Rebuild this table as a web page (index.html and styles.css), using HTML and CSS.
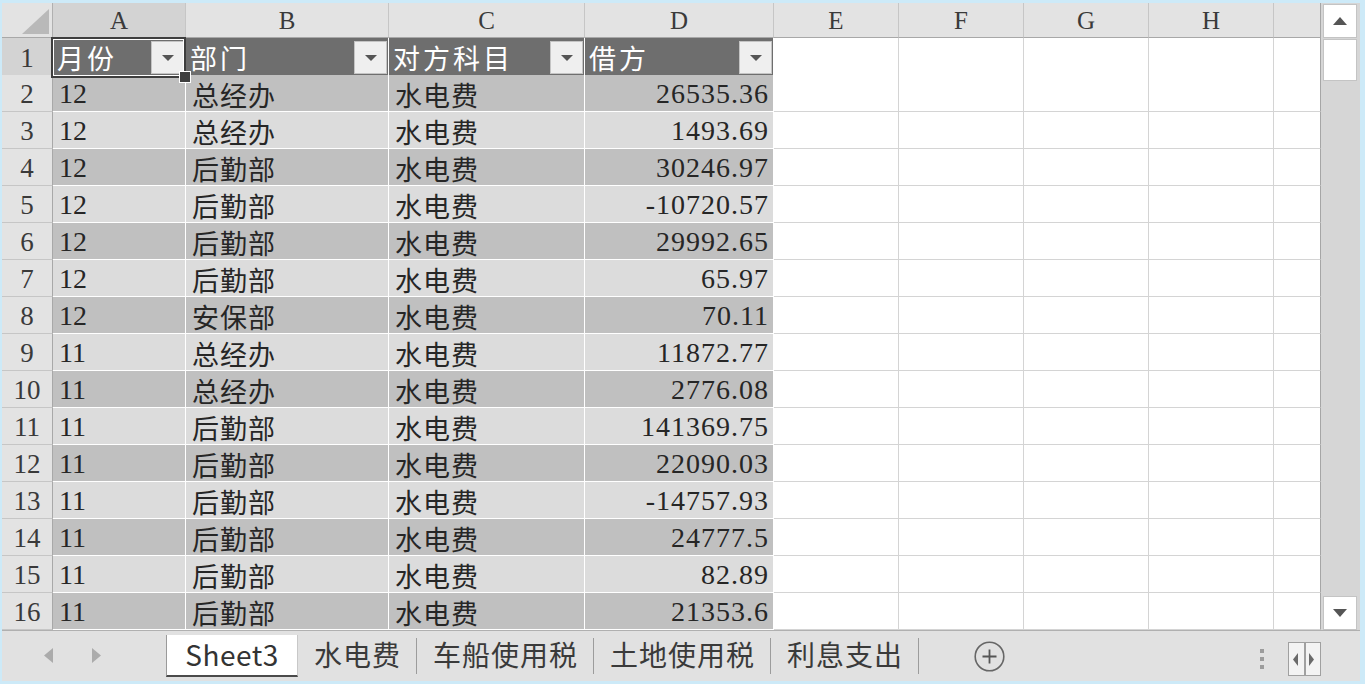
FILE: index.html
```html
<!DOCTYPE html>
<html lang="zh-CN">
<head>
<meta charset="utf-8">
<title>Sheet3</title>
<link rel="stylesheet" href="styles.css">
</head>
<body>
<div class="app">
  <div class="main">
    <div class="sheet">
      <div class="row hdr">
        <div class="corner"><svg class="corner-tri" width="27" height="25" viewBox="0 0 27 25"><polygon points="27,0 27,25 0,25" fill="#b9b9b9"/></svg></div>
        <div class="ch sel">A</div><div class="ch">B</div><div class="ch">C</div><div class="ch">D</div><div class="ch">E</div><div class="ch">F</div><div class="ch">G</div><div class="ch">H</div><div class="ch last"></div>
      </div>
      <div class="row">
        <div class="rh sel">1</div>
        <div class="c th a1"><span>月份</span><span class="dd"><i></i></span></div>
        <div class="c th"><span>部门</span><span class="dd"><i></i></span></div>
        <div class="c th"><span>对方科目</span><span class="dd"><i></i></span></div>
        <div class="c th"><span>借方</span><span class="dd"><i></i></span></div>
        <div class="e"></div><div class="e"></div><div class="e"></div><div class="e"></div><div class="e last"></div>
      </div>
      <div class="row">
        <div class="rh">2</div><div class="c dk">12</div><div class="c dk cjk">总经办</div><div class="c dk cjk">水电费</div><div class="c dk num">26535.36</div>
        <div class="e"></div><div class="e"></div><div class="e"></div><div class="e"></div><div class="e last"></div>
      </div>
      <div class="row">
        <div class="rh">3</div><div class="c lt">12</div><div class="c lt cjk">总经办</div><div class="c lt cjk">水电费</div><div class="c lt num">1493.69</div>
        <div class="e"></div><div class="e"></div><div class="e"></div><div class="e"></div><div class="e last"></div>
      </div>
      <div class="row">
        <div class="rh">4</div><div class="c dk">12</div><div class="c dk cjk">后勤部</div><div class="c dk cjk">水电费</div><div class="c dk num">30246.97</div>
        <div class="e"></div><div class="e"></div><div class="e"></div><div class="e"></div><div class="e last"></div>
      </div>
      <div class="row">
        <div class="rh">5</div><div class="c lt">12</div><div class="c lt cjk">后勤部</div><div class="c lt cjk">水电费</div><div class="c lt num">-10720.57</div>
        <div class="e"></div><div class="e"></div><div class="e"></div><div class="e"></div><div class="e last"></div>
      </div>
      <div class="row">
        <div class="rh">6</div><div class="c dk">12</div><div class="c dk cjk">后勤部</div><div class="c dk cjk">水电费</div><div class="c dk num">29992.65</div>
        <div class="e"></div><div class="e"></div><div class="e"></div><div class="e"></div><div class="e last"></div>
      </div>
      <div class="row">
        <div class="rh">7</div><div class="c lt">12</div><div class="c lt cjk">后勤部</div><div class="c lt cjk">水电费</div><div class="c lt num">65.97</div>
        <div class="e"></div><div class="e"></div><div class="e"></div><div class="e"></div><div class="e last"></div>
      </div>
      <div class="row">
        <div class="rh">8</div><div class="c dk">12</div><div class="c dk cjk">安保部</div><div class="c dk cjk">水电费</div><div class="c dk num">70.11</div>
        <div class="e"></div><div class="e"></div><div class="e"></div><div class="e"></div><div class="e last"></div>
      </div>
      <div class="row">
        <div class="rh">9</div><div class="c lt">11</div><div class="c lt cjk">总经办</div><div class="c lt cjk">水电费</div><div class="c lt num">11872.77</div>
        <div class="e"></div><div class="e"></div><div class="e"></div><div class="e"></div><div class="e last"></div>
      </div>
      <div class="row">
        <div class="rh">10</div><div class="c dk">11</div><div class="c dk cjk">总经办</div><div class="c dk cjk">水电费</div><div class="c dk num">2776.08</div>
        <div class="e"></div><div class="e"></div><div class="e"></div><div class="e"></div><div class="e last"></div>
      </div>
      <div class="row">
        <div class="rh">11</div><div class="c lt">11</div><div class="c lt cjk">后勤部</div><div class="c lt cjk">水电费</div><div class="c lt num">141369.75</div>
        <div class="e"></div><div class="e"></div><div class="e"></div><div class="e"></div><div class="e last"></div>
      </div>
      <div class="row">
        <div class="rh">12</div><div class="c dk">11</div><div class="c dk cjk">后勤部</div><div class="c dk cjk">水电费</div><div class="c dk num">22090.03</div>
        <div class="e"></div><div class="e"></div><div class="e"></div><div class="e"></div><div class="e last"></div>
      </div>
      <div class="row">
        <div class="rh">13</div><div class="c lt">11</div><div class="c lt cjk">后勤部</div><div class="c lt cjk">水电费</div><div class="c lt num">-14757.93</div>
        <div class="e"></div><div class="e"></div><div class="e"></div><div class="e"></div><div class="e last"></div>
      </div>
      <div class="row">
        <div class="rh">14</div><div class="c dk">11</div><div class="c dk cjk">后勤部</div><div class="c dk cjk">水电费</div><div class="c dk num">24777.5</div>
        <div class="e"></div><div class="e"></div><div class="e"></div><div class="e"></div><div class="e last"></div>
      </div>
      <div class="row">
        <div class="rh">15</div><div class="c lt">11</div><div class="c lt cjk">后勤部</div><div class="c lt cjk">水电费</div><div class="c lt num">82.89</div>
        <div class="e"></div><div class="e"></div><div class="e"></div><div class="e"></div><div class="e last"></div>
      </div>
      <div class="row">
        <div class="rh">16</div><div class="c dk">11</div><div class="c dk cjk">后勤部</div><div class="c dk cjk">水电费</div><div class="c dk num">21353.6</div>
        <div class="e"></div><div class="e"></div><div class="e"></div><div class="e"></div><div class="e last"></div>
      </div>
    </div>
    <div class="vscroll">
      <div class="sbtn"><svg width="14" height="8" viewBox="0 0 14 8"><polygon points="7,0 14,8 0,8" fill="#555"/></svg></div>
      <div class="thumb"></div>
      <div class="track"></div>
      <div class="sbtn"><svg width="14" height="8" viewBox="0 0 14 8"><polygon points="0,0 14,0 7,8" fill="#555"/></svg></div>
    </div>
  </div>
  <div class="tabbar">
    <div class="nav">
      <svg width="9" height="15" viewBox="0 0 9 15"><polygon points="9,0 9,15 0,7.5" fill="#ababab"/></svg>
      <svg width="9" height="15" viewBox="0 0 9 15"><polygon points="0,0 9,7.5 0,15" fill="#ababab"/></svg>
    </div>
    <div class="tab active">Sheet3</div>
    <div class="tab">水电费</div><span class="sep"></span>
    <div class="tab">车船使用税</div><span class="sep"></span>
    <div class="tab">土地使用税</div><span class="sep"></span>
    <div class="tab">利息支出</div><span class="sep"></span>
    <div class="add"><svg width="31" height="31" viewBox="0 0 31 31"><circle cx="15.5" cy="15.5" r="14.3" fill="none" stroke="#666" stroke-width="1.6"/><path d="M15.5 8.5v14M8.5 15.5h14" stroke="#555" stroke-width="1.8"/></svg></div>
    <div class="spacer"></div>
    <div class="dots"><i></i><i></i><i></i></div>
    <div class="split">
      <span class="half"><svg width="5" height="13" viewBox="0 0 5 13"><polygon points="5,0 5,13 0,6.5" fill="#6a6a6a"/></svg></span>
      <span class="half"><svg width="5" height="13" viewBox="0 0 5 13"><polygon points="0,0 5,6.5 0,13" fill="#6a6a6a"/></svg></span>
    </div>
  </div>
</div>
</body>
</html>
```

FILE: styles.css
```css
* {
  box-sizing: border-box;
  margin: 0;
  padding: 0;
}

body {
  width: 1365px;
  height: 684px;
  overflow: hidden;
  background: #cdeaf8;
  font-family: "Liberation Serif", "Noto Sans CJK SC", serif;
  color: #262626;
}

.app {
  margin: 3px 0 0 2px;
  width: 1358px;
  height: 678px;
  display: flex;
  flex-direction: column;
  background: #e1e1e1;
}

.main {
  display: flex;
  height: 627px;
}

.sheet {
  width: 1319px;
  display: flex;
  flex-direction: column;
  background: #fff;
}

.row {
  display: grid;
  grid-template-columns: 51px 133px 203px 196px 189px 125px 125px 125px 125px 47px;
  height: 37px;
}

.row.hdr {
  height: 35px;
}

.corner {
  background: #e3e3e3;
  border-right: 1px solid #b0b0b0;
  border-bottom: 1px solid #a8a8a8;
  display: flex;
  align-items: flex-end;
  justify-content: flex-end;
  padding: 0 3px 3px 0;
}

.ch {
  background: #e3e3e3;
  border-right: 1px solid #c6c6c6;
  border-bottom: 1px solid #a8a8a8;
  display: flex;
  align-items: center;
  justify-content: center;
  font-size: 25px;
  color: #3a3a3a;
  padding-top: 2px;
}

.ch.sel {
  background: #d3d3d3;
}

.ch.last {
  border-right: 1px solid #a6a6a6;
}

.rh {
  background: #e3e3e3;
  border-right: 1px solid #a8a8a8;
  border-bottom: 1px solid #c6c6c6;
  display: flex;
  align-items: center;
  justify-content: center;
  font-size: 27px;
  color: #3a3a3a;
  padding-top: 2px;
}

.rh.sel {
  background: #d3d3d3;
}

.c {
  display: flex;
  align-items: center;
  padding: 2px 6px 0;
  font-size: 28px;
  border-right: 1px solid #fff;
  border-bottom: 1px solid #fff;
  white-space: nowrap;
  overflow: hidden;
}

.cjk {
  font-size: 27px;
  letter-spacing: 1px;
}

.dk {
  background: #c0c0c0;
}

.lt {
  background: #dcdcdc;
}

.num {
  justify-content: flex-end;
  letter-spacing: 1px;
  padding-right: 4px;
}

.th {
  background: #6e6e6e;
  color: #fff;
  font-size: 27px;
  letter-spacing: 3px;
  justify-content: space-between;
  padding: 0 1px 0 4px;
  overflow: visible;
}

.dd {
  width: 33px;
  height: 33px;
  background: #efefef;
  border: 1px solid #c4c4c4;
  display: flex;
  align-items: center;
  justify-content: center;
  flex-shrink: 0;
}

.dd i {
  width: 0;
  height: 0;
  border-left: 6px solid transparent;
  border-right: 6px solid transparent;
  border-top: 6px solid #555;
}

.a1 {
  position: relative;
  z-index: 2;
}

.a1::before {
  content: "";
  position: absolute;
  top: -1px;
  left: -2px;
  right: -1px;
  bottom: -1px;
  border: 2px solid #3e3e3e;
  box-shadow: inset 0 0 0 1px #fff;
  pointer-events: none;
}

.a1::after {
  content: "";
  position: absolute;
  right: -6px;
  bottom: -6px;
  width: 10px;
  height: 10px;
  background: #3e3e3e;
  border: 1px solid #fff;
}

.e {
  background: #fff;
  border-right: 1px solid #d4d4d4;
  border-bottom: 1px solid #d4d4d4;
}

.e.last {
  border-right: 1px solid #a6a6a6;
}

.vscroll {
  width: 39px;
  background: #d6d6d6;
  display: flex;
  flex-direction: column;
  padding: 1px 3px 0 2px;
}

.sbtn {
  height: 34px;
  background: #fff;
  border: 1px solid #c4c4c4;
  display: flex;
  align-items: center;
  justify-content: center;
}

.thumb {
  margin-top: 1px;
  height: 42px;
  background: #fff;
  border: 1px solid #c4c4c4;
}

.track {
  flex: 1;
}

.tabbar {
  flex: 1;
  display: flex;
  align-items: flex-start;
  border-top: 1px solid #b0b0b0;
  padding-top: 4px;
  font-family: "Noto Sans CJK SC", "Liberation Sans", sans-serif;
  font-size: 28px;
  color: #3a3a3a;
}

.nav {
  width: 164px;
  height: 40px;
  display: flex;
  align-items: center;
  gap: 39px;
  padding-left: 42px;
}

.tab {
  height: 40px;
  line-height: 38px;
  padding: 0 15px 0 16px;
  letter-spacing: 1px;
  white-space: nowrap;
}

.tab.active {
  width: 132px;
  padding: 0;
  text-align: center;
  letter-spacing: 0.5px;
  background: #fff;
  border-left: 1px solid #9a9a9a;
  border-right: 1px solid #c8c8c8;
  border-bottom: 2px solid #4a4a4a;
  height: 42px;
  color: #333;
}

.sep {
  width: 1px;
  height: 36px;
  margin-top: 3px;
  background: #9c9c9c;
}

.add {
  margin-left: 55px;
  margin-top: 5px;
  height: 31px;
}

.spacer {
  flex: 1;
}

.dots {
  display: flex;
  flex-direction: column;
  gap: 4px;
  margin-top: 14px;
  margin-right: 24px;
}

.dots i {
  width: 4px;
  height: 4px;
  background: #9c9c9c;
}

.split {
  width: 33px;
  height: 34px;
  margin-top: 7px;
  margin-right: 39px;
  display: flex;
  border: 1px solid #a0a0a0;
  background: #f3f3f3;
}

.half {
  flex: 1;
  display: flex;
  align-items: center;
  padding-left: 4px;
}

.half + .half {
  border-left: 2px solid #a0a0a0;
  padding-left: 3px;
}
```
